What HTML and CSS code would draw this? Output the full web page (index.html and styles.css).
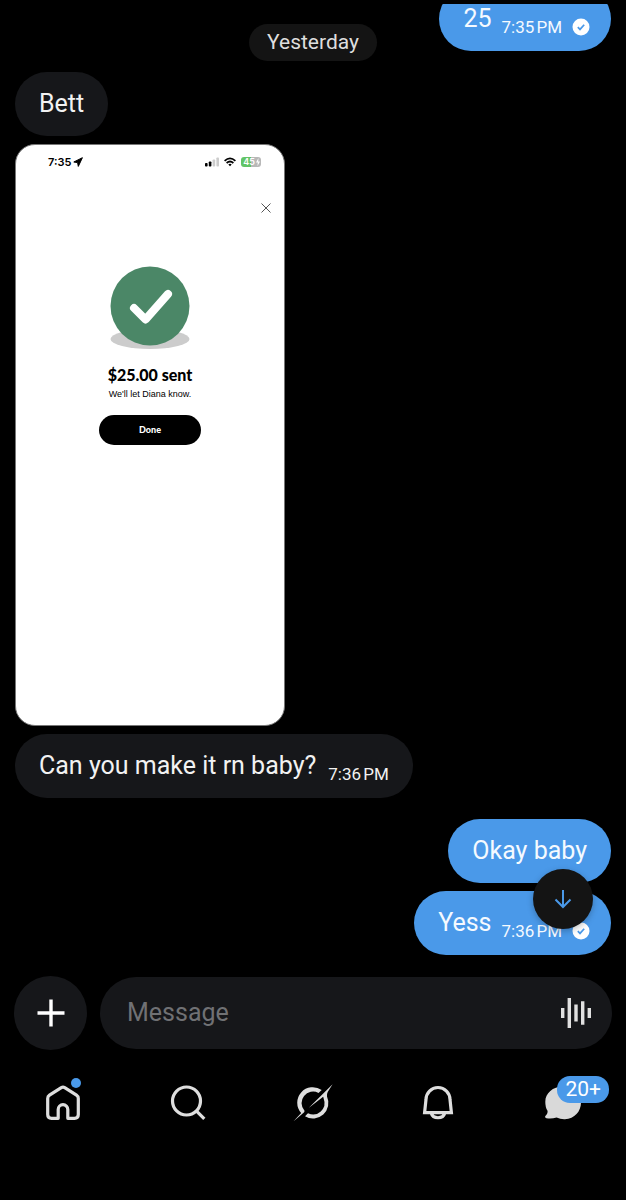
FILE: index.html
```html
<!DOCTYPE html>
<html lang="en">
<head>
<meta charset="utf-8">
<meta name="viewport" content="width=device-width, initial-scale=1">
<title>Messages</title>
<link rel="stylesheet" href="styles.css">
</head>
<body>
<main class="chat">
  <div class="date">Yesterday</div>
  <div class="thread">
    <div class="group sent">
      <div class="bubble"><span>25</span><time>7:35&#8239;PM</time>
        <svg class="tick" viewBox="0 0 18 18" role="img" aria-label="Read"><circle cx="9" cy="9" r="8.5" fill="#fff"/><path d="M5.8 9.2 8 11.4 12.2 6.8" fill="none" stroke="#4a99e9" stroke-width="1.7"/></svg>
      </div>
    </div>
    <div class="group received">
      <div class="bubble"><span>Bett</span></div>
      <section class="receipt">
        <div class="status">
          <span class="clock">7:35
            <svg width="10" height="10" viewBox="0 0 10 10" aria-hidden="true"><path d="M.8 5 9.4.7 5.3 9.4 4.6 5.6Z" fill="#000" stroke="#000" stroke-linejoin="round"/></svg>
          </span>
          <span class="indicators">
            <svg width="14" height="10" viewBox="0 0 14 10" aria-hidden="true"><g fill="#000"><rect x="0" y="6" width="2.6" height="3.5" rx=".8"/><rect x="3.8" y="4.5" width="2.6" height="5" rx=".8"/></g><g fill="#ccc"><rect x="7.6" y="2.5" width="2.6" height="7" rx=".8"/><rect x="11.4" y=".5" width="2.6" height="9" rx=".8"/></g></svg>
            <svg width="12" height="10" viewBox="0 0 12 10" fill="none" stroke="#000" stroke-width="1.7" aria-hidden="true"><path d="M.6 3.8Q6-1 11.4 3.8M2.6 6Q6 3 9.4 6"/><path d="M4.3 7.4Q6 6 7.7 7.4L6 9.3Z" fill="#000" stroke="none"/></svg>
            <span class="battery">45<svg width="4" height="8" viewBox="0 0 4 8" aria-hidden="true"><path d="M2.5 0 0 4.4H1.8L1.5 8 4 3.5H2.2Z" fill="#fff"/></svg></span>
          </span>
        </div>
        <button class="close" aria-label="Close"><svg width="10" height="10" viewBox="0 0 10 10"><path d="M.5.5 9.5 9.5M9.5.5.5 9.5" stroke="#555" stroke-width="1"/></svg></button>
        <svg class="success" viewBox="0 0 80 84" aria-hidden="true"><ellipse cx="40" cy="73" rx="39.5" ry="10" fill="#ccc"/><circle cx="40" cy="40" r="39.5" fill="#4b8767"/><path d="M24 42 35.5 53.5 58 28" fill="none" stroke="#fff" stroke-width="8" stroke-linecap="round" stroke-linejoin="round"/></svg>
        <h2>$25.00 sent</h2>
        <p>We'll let Diana know.</p>
        <button class="done">Done</button>
      </section>
      <div class="bubble"><span>Can you make it rn baby?</span><time>7:36&#8239;PM</time></div>
    </div>
    <div class="group sent">
      <div class="bubble"><span>Okay baby</span></div>
      <div class="bubble"><span>Yess</span><time>7:36&#8239;PM</time>
        <svg class="tick" viewBox="0 0 18 18" role="img" aria-label="Read"><circle cx="9" cy="9" r="8.5" fill="#fff"/><path d="M5.8 9.2 8 11.4 12.2 6.8" fill="none" stroke="#4a99e9" stroke-width="1.7"/></svg>
      </div>
    </div>
  </div>
  <button class="jump" aria-label="Scroll to latest"><svg width="18" height="20" viewBox="0 0 18 20" fill="none" stroke="#4a99e9" stroke-width="2"><path d="M9 1V18M1.5 10.5 9 18 16.5 10.5"/></svg></button>
</main>
<form class="composer">
  <button class="add" type="button" aria-label="Add attachment"><svg width="28" height="28" viewBox="0 0 28 28"><path d="M14 .5V27.5M.5 14H27.5" stroke="#fff" stroke-width="3.4"/></svg></button>
  <div class="field">
    <input type="text" placeholder="Message" aria-label="Message">
    <button class="voice" type="button" aria-label="Record voice"><svg width="32" height="32" viewBox="0 0 32 32" fill="#e0e0e0"><path d="M1 11h3.4v10H1zM7.6 1H11v30H7.6zM14.3 7.5h3.4v17h-3.4zM21 4.3h3.4v23.4H21zM27.6 11H31v10h-3.4z"/></svg></button>
  </div>
</form>
<nav class="tabs" aria-label="Main">
  <a href="#home" aria-label="Home"><svg viewBox="0 0 40 40" fill="none" stroke="#dedede" stroke-width="3.2" stroke-linejoin="round"><path d="M18.3 4.6Q20 3.6 21.7 4.6L33.5 12.2Q35.3 13.4 35.3 15.5V31.5Q35.3 35.3 31.5 35.3H24.8V26.5A4.8 4.8 0 0 0 15.2 26.5V35.3H8.5Q4.7 35.3 4.7 31.5V15.5Q4.7 13.4 6.5 12.2Z"/></svg><span class="dot"></span></a>
  <a href="#search" aria-label="Search"><svg viewBox="0 0 40 40" fill="none" stroke="#dedede" stroke-width="3.2"><circle cx="18.5" cy="18" r="14"/><path d="M28.3 27.8 36.3 35.8"/></svg></a>
  <a href="#grok" aria-label="Grok"><svg viewBox="0 0 40 40" fill="#dedede"><path d="M.3 38.5 8.2 30.1A15.5 15.5 0 0 1 28.7 7.1L25.5 9.9A11.5 11.5 0 0 0 11.5 27.7Q11.6 28.8 10.6 29.8Z"/><path d="M15.6 25 39.6 1.3 34.7 9Q33.7 11 34 13.5A15.5 15.5 0 0 1 12 33.3L15 30.3A11.5 11.5 0 0 0 30.7 15.8L30.2 13.8Z"/></svg></a>
  <a href="#notifications" aria-label="Notifications"><svg viewBox="0 0 40 40" fill="none" stroke="#dedede" stroke-width="3.2"><path d="M8 16.5A12 12 0 0 1 32 16.5L33.4 29.6H6.6ZM13.2 30A7 6.2 0 0 0 26.8 30"/></svg></a>
  <a href="#messages" aria-label="Messages, more than 20 unread"><svg viewBox="0 0 40 40"><path d="M20 3.5C9.8 3.5 2.3 10.2 2.3 18.7Q2.3 24.5 4.4 27.6Q5.4 30.2 2.1 33.2Q2 35 3.5 35.2Q8.5 36 13.6 34.5Q17.5 36.4 22 36.2C31.5 35.8 38 28.5 38 19.5C38 10.2 30 3.5 20 3.5Z" fill="#d9d9d9"/></svg><span class="badge">20+</span></a>
</nav>
</body>
</html>
```
FILE: styles.css
```css
* { box-sizing: border-box; }
body {
  margin: 0;
  height: 100vh;
  padding-top: 4px;
  display: flex;
  flex-direction: column;
  background: #000;
  color: #f2f2f2;
  font-family: Roboto, sans-serif;
}
button { border: 0; padding: 0; font: inherit; color: inherit; display: grid; place-items: center; }
svg { display: block; flex: none; }

.chat { position: relative; flex: 1; min-height: 0; }
.thread {
  height: 100%;
  overflow: hidden;
  padding: 0 15px 21px;
  display: flex;
  flex-direction: column;
  justify-content: flex-end;
  gap: 21px;
}
.group { display: flex; flex-direction: column; align-items: flex-start; gap: 8px; }
.sent { align-items: flex-end; }
.bubble {
  display: flex;
  align-items: flex-end;
  gap: 12px;
  padding: 15px 24px;
  border-radius: 32px;
  background: #16171a;
  font-size: 25px;
  line-height: 34px;
}
.sent .bubble { background: #4a99e9; color: #f5faff; gap: 10px; }
.bubble time { font-size: 17px; line-height: 18px; }
.tick { width: 18px; height: 18px; margin-right: -3px; }
.date {
  position: absolute;
  z-index: 1;
  top: 20px;
  left: 50%;
  transform: translateX(-50%);
  padding: 4px 18px;
  border-radius: 19px;
  background: #141414;
  color: #dedede;
  font-size: 21px;
  line-height: 29px;
}
.jump {
  position: absolute;
  right: 33px;
  bottom: 47px;
  width: 60px;
  height: 60px;
  border-radius: 50%;
  background: #141414;
  box-shadow: 0 2px 6px rgba(0, 0, 0, .25);
}

.receipt {
  width: 270px;
  aspect-ratio: 270 / 582;
  border: 1px solid #777;
  border-radius: 20px;
  background: #fff;
  color: #000;
  display: flex;
  flex-direction: column;
  align-items: center;
  font-family: Lato, sans-serif;
}
.status {
  align-self: stretch;
  display: flex;
  align-items: center;
  justify-content: space-between;
  padding: 10px 23px 0 32px;
  font-family: Inter, sans-serif;
  font-weight: 600;
}
.clock, .indicators { display: flex; align-items: center; }
.clock { gap: 2px; font-size: 11px; line-height: 14px; }
.indicators { gap: 5px; }
.battery {
  display: flex;
  align-items: center;
  gap: 1px;
  padding: 0 1px 0 2px;
  border-radius: 3px;
  background: linear-gradient(90deg, #62c466 50%, #b8b8b8 50%);
  color: #fff;
  font-size: 9px;
  line-height: 10px;
}
.close { align-self: flex-end; margin: 34px 13px 0 0; background: none; }
.success { width: 80px; margin-top: 53px; }
.receipt h2 { margin: 14px 0 0; font-size: 16px; line-height: 22px; font-weight: 900; }
.receipt p { margin: 1px 0 0; font: 500 9px/14px "Liberation Sans", sans-serif; }
.done {
  width: 102px;
  height: 30px;
  margin-top: 14px;
  border-radius: 15px;
  background: #000;
  color: #fff;
  font-size: 9px;
  line-height: 10px;
  font-weight: 900;
}

.composer { display: flex; align-items: center; gap: 13px; padding: 0 14px; }
.add { flex: none; width: 73px; height: 74px; border-radius: 50%; background: #16171a; }
.field {
  flex: 1;
  min-width: 0;
  display: flex;
  align-items: center;
  height: 72px;
  padding: 0 20px 0 27px;
  border-radius: 36px;
  background: #16171a;
}
.field input {
  flex: 1;
  min-width: 0;
  padding: 0;
  border: 0;
  outline: 0;
  background: none;
  color: #f2f2f2;
  font: 25px/34px Roboto, sans-serif;
}
.field input::placeholder { color: #707174; opacity: 1; }
.voice { background: none; }

.tabs { display: grid; grid-template-columns: repeat(5, 1fr); padding: 33px 0 77px; }
.tabs a { position: relative; justify-self: center; color: #fff; text-decoration: none; }
.tabs svg { width: 40px; height: 40px; }
.dot {
  position: absolute;
  top: -5px;
  right: 2px;
  width: 10px;
  height: 10px;
  border-radius: 50%;
  background: #4a99e9;
}
.badge {
  position: absolute;
  top: -7px;
  left: 14px;
  padding: 0 8px;
  border-radius: 13px;
  background: #4a99e9;
  font-size: 21px;
  line-height: 27px;
}
```
